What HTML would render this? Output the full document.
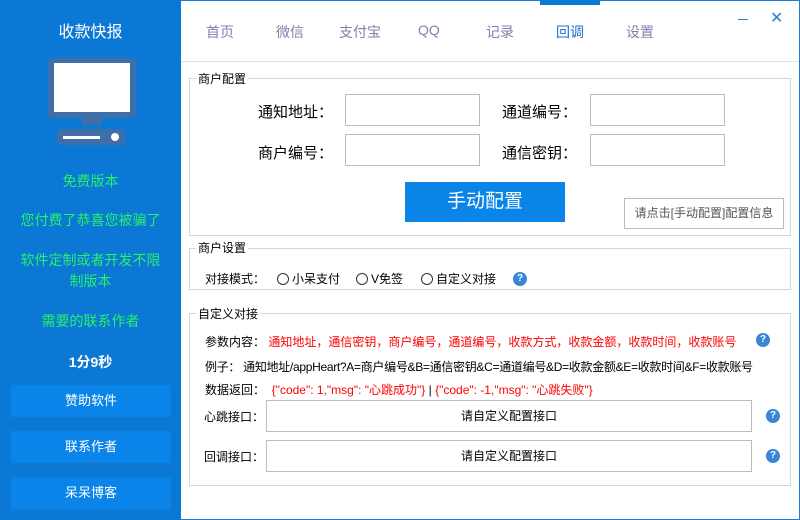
<!DOCTYPE html>
<html><head><meta charset="utf-8"><style>
*{margin:0;padding:0;box-sizing:border-box}
body{width:800px;height:520px;overflow:hidden;background:#fff;font-family:"Liberation Sans","Noto Sans CJK SC",sans-serif;position:relative;font-size:13px;color:#000}
.a{position:absolute}
#side{left:0;top:0;width:181px;height:520px;background:#0b78d6}
.g{color:#27f06a;font-size:14px;text-align:center;width:181px;left:0}
.btn{left:11px;width:160px;height:32px;background:#0a84e8;color:#fff;text-align:center;line-height:32px;font-size:13px}
#frame{left:180px;top:0;width:620px;height:520px;border:1px solid #1a7fd8;border-left:none}
.tab{top:22px;font-size:14px;color:#8080b0}
.box{border:1px solid #d6d6d6}
.leg{background:#fff;padding:0 2px;font-size:12px}
.lbl{font-size:15px}
.in{border:1px solid #bdbdbd;background:#fff;width:135px;height:32px}
.q{width:14px;height:14px;border-radius:50%;background:#3a86d6;color:#fff;font-size:10px;text-align:center;line-height:14px;font-weight:bold}
.r{width:12px;height:12px;border:1px solid #333;border-radius:50%;display:inline-block;vertical-align:-2px;margin-right:3px}
.lb2{font-size:12px}
.wide{left:266px;width:486px;height:32px;border:1px solid #bdbdbd;text-align:center;line-height:30px;font-size:12px}
</style></head><body>
<div id="side" class="a">
<div class="a" style="left:0;width:181px;top:18px;text-align:center;color:#fff;font-size:16px">收款快报</div>
<div class="a" style="left:48px;top:58px;width:88px;height:60px;background:#3f6fa8;border-radius:4px"></div>
<div class="a" style="left:54px;top:63px;width:76px;height:49px;background:#fff"></div>
<div class="a" style="left:82px;top:118px;width:20px;height:7px;background:#3f6fa8"></div>
<div class="a" style="left:57px;top:129px;width:68px;height:16px;background:#3f6fa8;border-radius:3px"></div>
<div class="a" style="left:63px;top:136px;width:37px;height:3px;background:#fff"></div>
<div class="a" style="left:111px;top:133px;width:8px;height:8px;background:#fff;border-radius:50%"></div>
<div class="a g" style="top:171px">免费版本</div>
<div class="a g" style="top:210px">您付费了恭喜您被骗了</div>
<div class="a g" style="top:250px;line-height:21px;padding:0 15px">软件定制或者开发不限制版本</div>
<div class="a g" style="top:311px">需要的联系作者</div>
<div class="a" style="left:0;width:181px;top:352px;text-align:center;color:#fff;font-size:14px;font-weight:bold">1分9秒</div>
<div class="a btn" style="top:385px">赞助软件</div>
<div class="a btn" style="top:431px">联系作者</div>
<div class="a btn" style="top:477px">呆呆博客</div>
</div>
<div id="frame" class="a"></div>
<div class="a" style="left:540px;top:0;width:60px;height:5px;background:#0b78d6"></div>
<div class="a" style="left:738px;top:19px;width:10px;height:1px;background:#2a7fd8"></div>
<div class="a" style="left:770px;top:8px;color:#2a7fd8;font-size:16px">✕</div>
<div class="a tab" style="left:206px">首页</div>
<div class="a tab" style="left:276px">微信</div>
<div class="a tab" style="left:339px">支付宝</div>
<div class="a tab" style="left:418px">QQ</div>
<div class="a tab" style="left:486px">记录</div>
<div class="a tab" style="left:556px;color:#1a6fd0">回调</div>
<div class="a tab" style="left:626px">设置</div>
<div class="a" style="left:181px;top:61px;width:618px;height:1px;background:#e2e2e2"></div>

<div class="a box" style="left:189px;top:78px;width:602px;height:158px"></div>
<div class="a leg" style="left:196px;top:70px">商户配置</div>
<div class="a lbl" style="left:258px;top:101px">通知地址：</div>
<div class="a in" style="left:345px;top:94px"></div>
<div class="a lbl" style="left:502px;top:101px">通道编号：</div>
<div class="a in" style="left:590px;top:94px"></div>
<div class="a lbl" style="left:258px;top:142px">商户编号：</div>
<div class="a in" style="left:345px;top:134px"></div>
<div class="a lbl" style="left:502px;top:142px">通信密钥：</div>
<div class="a in" style="left:590px;top:134px"></div>
<div class="a" style="left:405px;top:182px;width:160px;height:40px;background:#0b84e8;color:#fff;font-size:19px;text-align:center;line-height:40px">手动配置</div>
<div class="a" style="left:624px;top:198px;width:160px;height:31px;border:1px solid #bdbdbd;color:#555;font-size:12px;text-align:center;line-height:29px">请点击[手动配置]配置信息</div>

<div class="a box" style="left:189px;top:248px;width:602px;height:42px"></div>
<div class="a leg" style="left:196px;top:239px">商户设置</div>
<div class="a lb2" style="left:205px;top:270px">对接模式：</div>
<div class="a lb2" style="left:277px;top:270px"><span class="r"></span>小呆支付</div>
<div class="a lb2" style="left:356px;top:270px"><span class="r"></span>V免签</div>
<div class="a lb2" style="left:421px;top:270px"><span class="r"></span>自定义对接</div>
<div class="a q" style="left:513px;top:272px">?</div>

<div class="a box" style="left:189px;top:313px;width:602px;height:173px"></div>
<div class="a leg" style="left:196px;top:305px">自定义对接</div>
<div class="a lb2" style="left:205px;top:333px">参数内容：&nbsp;<span style="color:#f00">通知地址，通信密钥，商户编号，通道编号，收款方式，收款金额，收款时间，收款账号</span></div>
<div class="a q" style="left:756px;top:333px">?</div>
<div class="a lb2" style="left:205px;top:358px;letter-spacing:-0.3px">例子：&nbsp;通知地址/appHeart?A=商户编号&amp;B=通信密钥&amp;C=通道编号&amp;D=收款金额&amp;E=收款时间&amp;F=收款账号</div>
<div class="a lb2" style="left:205px;top:381px">数据返回：&nbsp;&nbsp;<span style="color:#f00">{"code": 1,"msg": "心跳成功"}</span> | <span style="color:#f00">{"code": -1,"msg": "心跳失败"}</span></div>
<div class="a lb2" style="left:204px;top:408px">心跳接口：</div>
<div class="a wide" style="top:400px">请自定义配置接口</div>
<div class="a q" style="left:766px;top:409px">?</div>
<div class="a lb2" style="left:204px;top:448px">回调接口：</div>
<div class="a wide" style="top:440px">请自定义配置接口</div>
<div class="a q" style="left:766px;top:449px">?</div>
</body></html>
